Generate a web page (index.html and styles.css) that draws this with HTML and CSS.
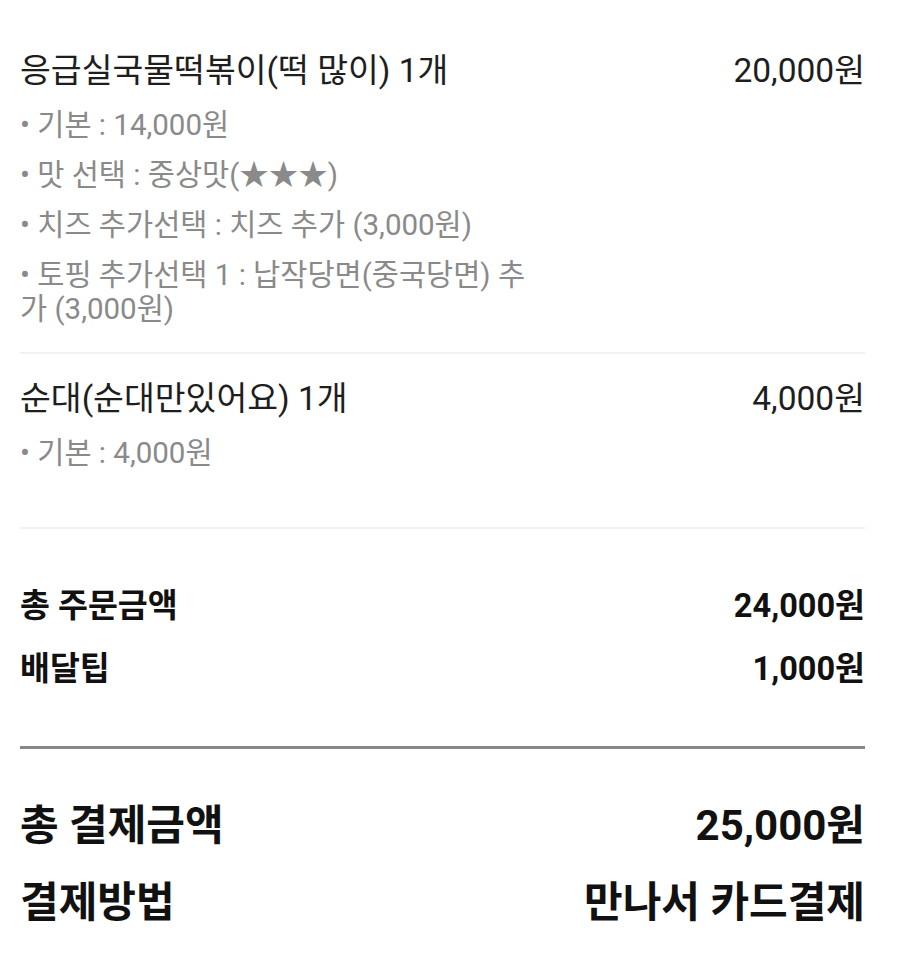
FILE: index.html
```html
<!DOCTYPE html>
<html lang="ko">
<head>
<meta charset="utf-8">
<link rel="stylesheet" href="styles.css">
</head>
<body>
<div class="receipt">
  <div class="items">
    <div class="item">
      <div class="item-head">
        <span class="item-name">응급실국물떡볶이(떡 많이) 1개</span>
        <span class="item-price">20,000원</span>
      </div>
      <ul class="options">
        <li>• 기본 : 14,000원</li>
        <li>• 맛 선택 : 중상맛(★★★)</li>
        <li>• 치즈 추가선택 : 치즈 추가 (3,000원)</li>
        <li>• 토핑 추가선택 1 : 납작당면(중국당면) 추가 (3,000원)</li>
      </ul>
    </div>
    <div class="item">
      <div class="item-head">
        <span class="item-name">순대(순대만있어요) 1개</span>
        <span class="item-price">4,000원</span>
      </div>
      <ul class="options">
        <li>• 기본 : 4,000원</li>
      </ul>
    </div>
  </div>
  <div class="summary">
    <div class="row"><span>총 주문금액</span><span>24,000원</span></div>
    <div class="row"><span>배달팁</span><span>1,000원</span></div>
  </div>
  <div class="total">
    <div class="row"><span>총 결제금액</span><span>25,000원</span></div>
    <div class="row"><span>결제방법</span><span>만나서 카드결제</span></div>
  </div>
</div>
</body>
</html>
```
FILE: styles.css
```css
html, body {
  margin: 0;
  padding: 0;
  background: #fff;
}
body {
  font-family: Roboto, "Noto Sans CJK KR", sans-serif;
  color: #222;
}
.receipt {
  width: 845px;
  margin-left: 20px;
  padding-top: 26px;
}
.items {
  padding-bottom: 31px;
  border-bottom: 2px solid #f2f2f2;
}
.item {
  padding: 23px 0 26px;
}
.item + .item {
  border-top: 2px solid #f2f2f2;
}
.item-head {
  display: flex;
  justify-content: space-between;
  font-size: 33.5px;
  line-height: 44px;
  color: #1e1e1e;
}
.options {
  list-style: none;
  margin: 0;
  padding: 0;
  max-width: 515px;
  color: #8a8a8a;
  font-size: 29.5px;
  line-height: 34px;
}
.options li {
  margin-top: 16px;
}
.options li:first-child {
  margin-top: 15px;
}
.summary {
  padding: 57px 0 57px;
  border-bottom: 3px solid #888;
}
.summary .row {
  font-size: 32.5px;
  line-height: 40px;
}
.row {
  display: flex;
  justify-content: space-between;
  font-weight: 700;
  color: #111;
}
.summary .row + .row {
  margin-top: 23px;
}
.total {
  padding-top: 52px;
}
.total .row {
  font-size: 42px;
  line-height: 50px;
}
.total .row + .row {
  margin-top: 27px;
}
```
